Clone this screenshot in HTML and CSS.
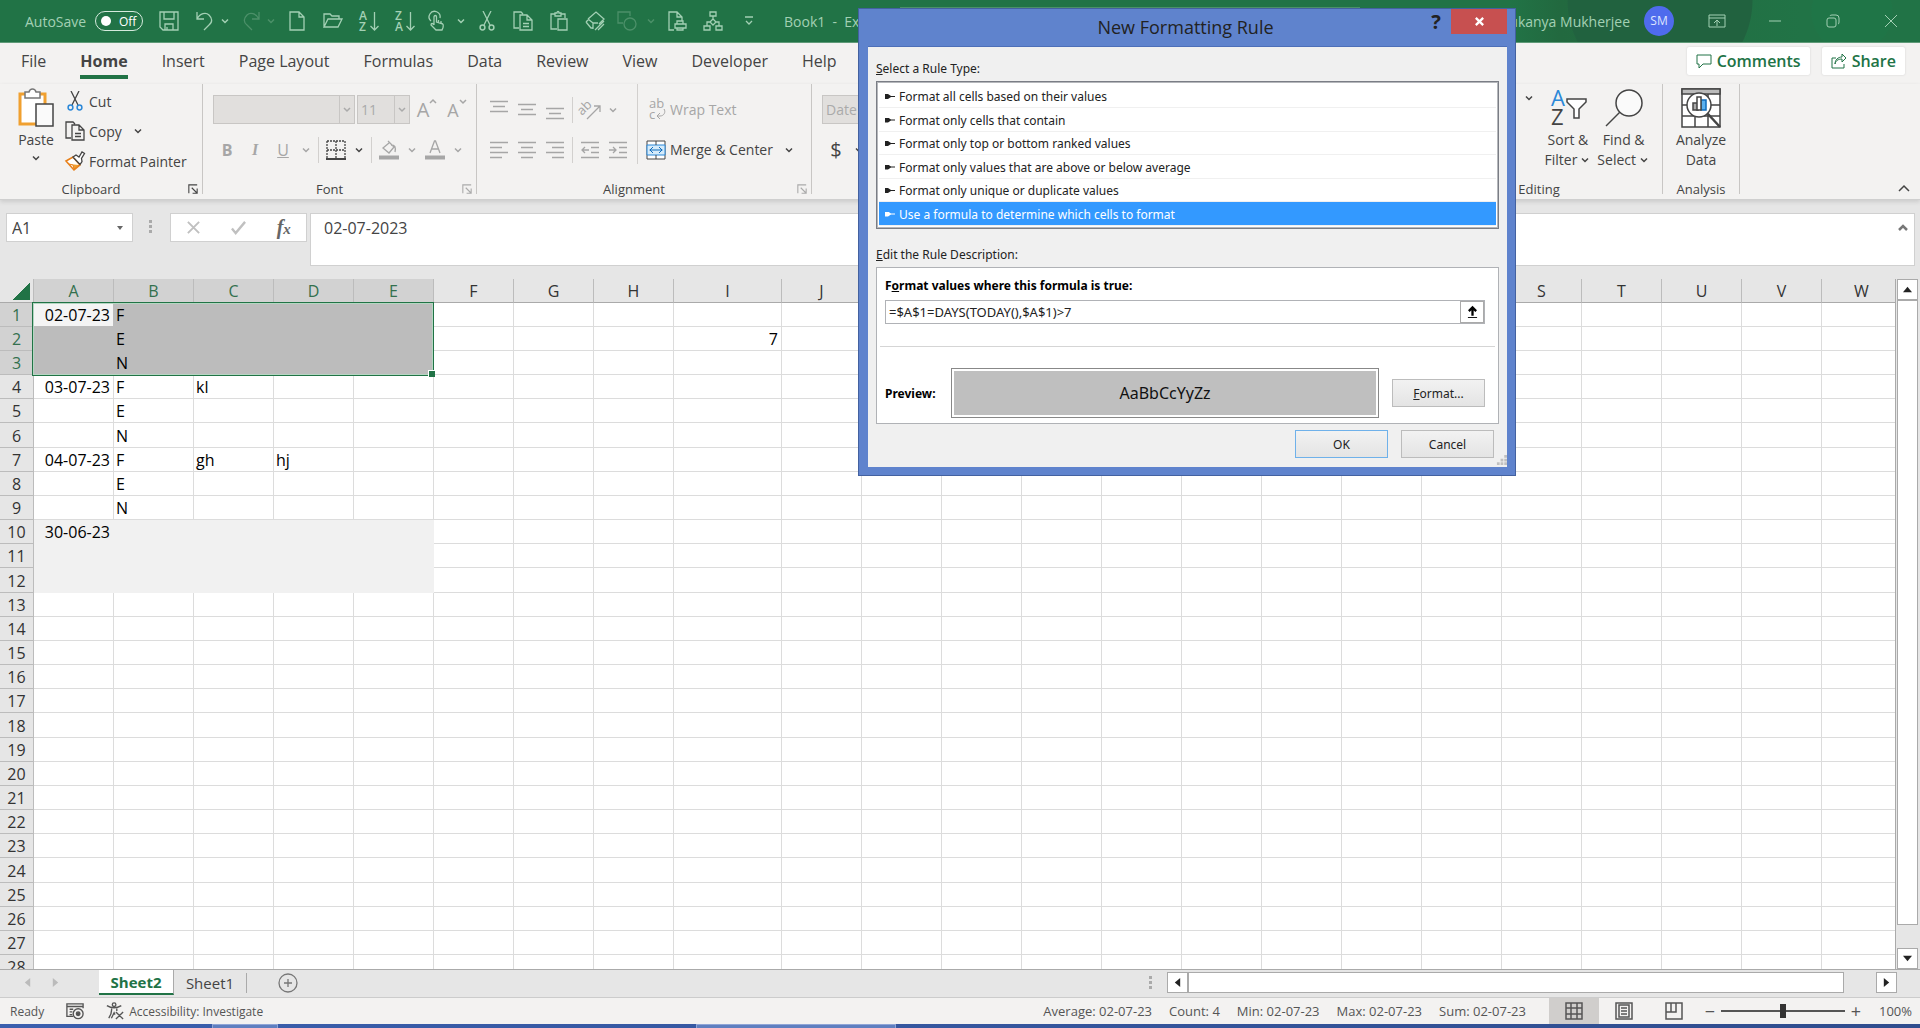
FILE: index.html
```html
<!DOCTYPE html>
<html lang="en">
<head>
    <meta charset="UTF-8">
    <meta name="viewport" content="width=device-width, initial-scale=1.0">
    <title>Book1 - Excel</title>
    <link rel="stylesheet" href="styles.css">
</head>
<body>
    <svg class="sprite" aria-hidden="true">
        <symbol id="chev" viewBox="0 0 12 12"><path d="M3 4.5l3 3 3-3" fill="none" stroke="currentColor" stroke-width="1.5"/></symbol>
        <symbol id="launch" viewBox="0 0 12 12"><path d="M1 11V1h10M4.5 4.5l6 6M11 5.5V11H5.5" fill="none" stroke="currentColor" stroke-width="1.3"/></symbol>
        <symbol id="scissors" viewBox="0 0 20 20"><path d="M6 0l7 14M14 0L7 14" fill="none" stroke="currentColor" stroke-width="1.3"/><g fill="none" stroke="var(--ring, currentColor)" stroke-width="1.5"><circle cx="5.5" cy="16.5" r="2.4"/><circle cx="14.5" cy="16.5" r="2.4"/></g></symbol>
        <symbol id="copy" viewBox="0 0 20 20"><path d="M6 17H1V1h7l2 2M7 4h7l5 5v10H7zM14 4v5h5M10 12.5h6M10 15.5h6" fill="none" stroke="currentColor" stroke-width="1.3"/></symbol>
    </svg>

    <header class="titlebar">
        <label class="autosave" for="autosave">AutoSave
            <span class="switch"><input type="checkbox" id="autosave">Off</span>
        </label>
        <div class="quick">
            <button aria-label="Save"><svg viewBox="0 0 20 20"><path d="M1 1h18v18H4l-3-3zM5 1v7h10V1M6 19v-6h8v6M8 16v3"/></svg></button>
            <button aria-label="Undo"><svg viewBox="0 0 20 20"><path d="M2 1v7h7M2 8c3-6 9-7 12-4s4 7 0 10l-5 5"/></svg></button>
            <button class="drop" aria-label="Undo list"><svg><use href="#chev"/></svg></button>
            <button class="dim" aria-label="Redo"><svg viewBox="0 0 20 20"><path d="M18 1v7h-7M18 8C15 2 9 1 6 4S2 11 6 14l5 5"/></svg></button>
            <button class="drop dim" aria-label="Redo list"><svg><use href="#chev"/></svg></button>
            <button aria-label="New"><svg viewBox="0 0 20 20"><path d="M3 1h9l5 5v13H3zM12 1v5h5"/></svg></button>
            <button aria-label="Open"><svg viewBox="0 0 20 20"><path d="M1 16V3h6l2 2h7v3M1 16l4-8h14l-4 8z"/></svg></button>
            <button aria-label="Sort ascending"><svg viewBox="0 0 20 20"><text x="0" y="9">A</text><text x="0" y="20">Z</text><path d="M15.5 1v18M11.5 15l4 4 4-4"/></svg></button>
            <button aria-label="Sort descending"><svg viewBox="0 0 20 20"><text x="0" y="9">Z</text><text x="0" y="20">A</text><path d="M15.5 1v18M11.5 15l4 4 4-4"/></svg></button>
            <button class="tight" aria-label="Touch mode"><svg viewBox="0 0 20 20"><path d="M4 10a5.5 5.5 0 1 1 9-3M7 14V6c0-2 2.5-2 2.5 0v5l5 1.500c2 .5 2 2 1.5 4L15 19H9l-5-5c0-2 2-2 3 0M11.5 9v3M14 10v3"/></svg></button>
            <button class="drop tight" aria-label="Touch options"><svg><use href="#chev"/></svg></button>
            <button aria-label="Cut"><svg><use href="#scissors"/></svg></button>
            <button aria-label="Copy"><svg><use href="#copy"/></svg></button>
            <button aria-label="Paste"><svg viewBox="0 0 20 20"><path d="M8 18H2V3h4M12 3h4v4M6 5V2h2c0-2 2-2 2 0h2v3zM9 8h9v11H9z"/></svg></button>
            <button aria-label="Clear"><svg viewBox="0 0 20 20"><path d="M3 8l8-7 8 7-5 5M3 8l5 4M1 11l3-3M1 11l5 6h2M8 12v6M8 12h5M10 19l9-9M13 19l6-6"/></svg></button>
            <button class="tight dim" aria-label="Shapes"><svg viewBox="0 0 20 20"><path d="M6 12H1V1h12v4"/><circle cx="13" cy="13" r="6"/></svg></button>
            <button class="drop tight dim" aria-label="Shape list"><svg><use href="#chev"/></svg></button>
            <button aria-label="Print preview"><svg viewBox="0 0 20 20"><path d="M7 19H2V1h8l5 5v4M10 1v5h5M10 13v-3h6v3M8 13h11v4H8zM10 17h6v2h-6z"/></svg></button>
            <button aria-label="Organise"><svg viewBox="0 0 20 20"><path d="M7 1h6v4H7zM10 5v3M10 8l3 3-3 3-3-3zM7 11H4v4M13 11h3v4M1 15h6v4H1zM13 15h6v4h-6z"/></svg></button>
            <button aria-label="Customize"><svg viewBox="0 0 20 20"><path d="M6 6h8M7 10l3 3 3-3"/></svg></button>
        </div>
        <span class="book">Book1&nbsp;&nbsp;-&nbsp;&nbsp;Excel</span>
        <input class="search" type="search" aria-label="Search">
        <span class="user">Sukanya Mukherjee</span>
        <span class="avatar">SM</span>
        <div class="window-buttons">
            <button aria-label="Ribbon display"><svg viewBox="0 0 18 18"><path d="M1 3h16v12H1zM1 6h16M9 14V8M6 11l3-3 3 3"/></svg></button>
            <button aria-label="Minimize"><svg viewBox="0 0 18 18"><path d="M3 9h12"/></svg></button>
            <button aria-label="Restore"><svg viewBox="0 0 18 18"><rect x="3" y="6" width="9" height="9" rx="2"/><path d="M6 4q0-1 2-1h4q3 0 3 3v4q0 2-1 2"/></svg></button>
            <button aria-label="Close"><svg viewBox="0 0 18 18"><path d="M3 3l12 12M15 3L3 15"/></svg></button>
        </div>
    </header>

    <nav class="tabs">
        <a href="#">File</a>
        <a href="#" class="active">Home</a>
        <a href="#">Insert</a>
        <a href="#">Page Layout</a>
        <a href="#">Formulas</a>
        <a href="#">Data</a>
        <a href="#">Review</a>
        <a href="#">View</a>
        <a href="#">Developer</a>
        <a href="#">Help</a>
        <div class="tab-actions">
            <button><svg viewBox="0 0 16 16"><path d="M1 2h14v9H7l-4 4v-4H1z"/></svg>Comments</button>
            <button><svg viewBox="0 0 16 16"><path d="M5 5H1v10h12v-4M4 11c1-4 4-5 7-5V9l4-4-4-4v3C7 4 4 7 4 11z"/></svg>Share</button>
        </div>
    </nav>

    <section class="ribbon">
        <div class="group clipboard">
            <div class="group-body">
                <button class="big paste">
                    <svg viewBox="0 0 40 40"><path d="M4 6h25v30H4z" fill="#fff" stroke="#f0a030" stroke-width="3"/><path d="M9 4h4c1-4 6-4 7 0h4v6H9z" fill="#fff" stroke="#777" stroke-width="1.5"/><path d="M20 16h17v22H20z" fill="#fafafa" stroke="#444" stroke-width="1.5"/></svg>
                    Paste
                    <svg class="chev"><use href="#chev"/></svg>
                </button>
                <div class="stack">
                    <button><svg class="ico cut"><use href="#scissors"/></svg>Cut</button>
                    <button><svg class="ico"><use href="#copy"/></svg>Copy<svg class="chev"><use href="#chev"/></svg></button>
                    <button><svg class="ico" viewBox="0 0 20 20"><path d="M1 10l7-4 7 8-6 5z" fill="#fff" stroke="#e8801a" stroke-width="1.6"/><path d="M4 13l4 1 1 4 5-4" fill="#f0a030" stroke="#e8801a"/><path d="M8 6l3-2 3 2 3-5 2.5 1.5-3 5 .5 3-2 3z" fill="#fff" stroke="#444" stroke-width="1.3"/></svg>Format Painter</button>
                </div>
            </div>
            <div class="group-foot"><span>Clipboard</span><svg><use href="#launch"/></svg></div>
        </div>

        <div class="group font">
            <div class="group-body rows">
                <div class="row">
                    <span class="combo name"><select aria-label="Font" disabled><option></option></select><svg><use href="#chev"/></svg></span>
                    <span class="combo size"><select aria-label="Font size" disabled><option>11</option></select><svg><use href="#chev"/></svg></span>
                    <button class="grow" disabled aria-label="Increase font size">A<svg viewBox="0 0 8 8"><path d="M1 5l3-3 3 3"/></svg></button>
                    <button class="grow less" disabled aria-label="Decrease font size">A<svg viewBox="0 0 8 8"><path d="M1 2l3 3 3-3"/></svg></button>
                </div>
                <div class="row">
                    <button class="tool" disabled><b>B</b></button>
                    <button class="tool" disabled><i>I</i></button>
                    <button class="tool" disabled><u>U</u></button>
                    <button class="mini" disabled aria-label="Underline options"><svg><use href="#chev"/></svg></button>
                    <span class="sep"></span>
                    <button class="tool dark" aria-label="Borders"><svg viewBox="0 0 20 20"><path d="M1 1h18v17M1 1v17M10 1v17M1 10h18" stroke-dasharray="2 1"/><path d="M0 19h20" stroke-width="2"/></svg></button>
                    <button class="mini dark" aria-label="Border options"><svg><use href="#chev"/></svg></button>
                    <span class="sep"></span>
                    <button class="tool" disabled aria-label="Fill colour"><svg viewBox="0 0 20 20"><path d="M9 1l6 6-5 6-6-5 6-5M12 5c4 0 5 2 4 7"/><path d="M0 17.5h20" stroke-width="4"/></svg></button>
                    <button class="mini" disabled aria-label="Fill options"><svg><use href="#chev"/></svg></button>
                    <button class="tool" disabled aria-label="Font colour"><svg viewBox="0 0 20 20"><path d="M5 13L9.500 1h1L15 13M6.500 9h7"/><path d="M0 17.5h20" stroke-width="4"/></svg></button>
                    <button class="mini" disabled aria-label="Font colour options"><svg><use href="#chev"/></svg></button>
                </div>
            </div>
            <div class="group-foot off"><span>Font</span><svg><use href="#launch"/></svg></div>
        </div>

        <div class="group alignment">
            <div class="group-body">
                <div class="rows">
                    <div class="row">
                        <button class="tool" disabled aria-label="Top align"><svg viewBox="0 0 20 20"><path d="M1 1.5h18M4 6.5h12M1 11.5h18"/></svg></button>
                        <button class="tool" disabled aria-label="Middle align"><svg viewBox="0 0 20 20"><path d="M1 4.5h18M4 9.5h12M1 14.5h18"/></svg></button>
                        <button class="tool" disabled aria-label="Bottom align"><svg viewBox="0 0 20 20"><path d="M1 8.5h18M4 13.5h12M1 18.5h18"/></svg></button>
                        <span class="sep"></span>
                        <button class="tool" disabled aria-label="Orientation"><svg viewBox="0 0 20 20"><text x="2" y="16" transform="rotate(-45 2 16)">ab</text><path d="M7 19L20 6M14 6h6v6"/></svg></button>
                        <button class="mini" disabled aria-label="Orientation options"><svg><use href="#chev"/></svg></button>
                    </div>
                    <div class="row">
                        <button class="tool" disabled aria-label="Align left"><svg viewBox="0 0 20 20"><path d="M1 2.5h18M1 7.5h12M1 12.5h18M1 17.5h12"/></svg></button>
                        <button class="tool" disabled aria-label="Center"><svg viewBox="0 0 20 20"><path d="M1 2.5h18M4 7.5h12M1 12.5h18M4 17.5h12"/></svg></button>
                        <button class="tool" disabled aria-label="Align right"><svg viewBox="0 0 20 20"><path d="M1 2.5h18M7 7.5h12M1 12.5h18M7 17.5h12"/></svg></button>
                        <span class="sep"></span>
                        <button class="tool" disabled aria-label="Decrease indent"><svg viewBox="0 0 20 20"><path d="M1 2.5h18M11 7.5h8M11 12.5h8M1 17.5h18M9 10H2M5 7l-3 3 3 3"/></svg></button>
                        <button class="tool" disabled aria-label="Increase indent"><svg viewBox="0 0 20 20"><path d="M1 2.5h18M11 7.5h8M11 12.5h8M1 17.5h18M1 10h7M5 7l3 3-3 3"/></svg></button>
                    </div>
                </div>
                <div class="rows wide">
                    <button class="text" disabled><svg class="ico" viewBox="0 0 20 20"><text x="3" y="8">ab</text><text x="3" y="19">c</text><path d="M18 9c2 3 0 7-4 7h-3M14 13l-3 3 3 3"/></svg>Wrap Text</button>
                    <button class="text"><svg class="ico merge" viewBox="0 0 20 20"><path d="M1 1h18v18H1z" fill="#fff" stroke="#444"/><path d="M1 5h18v10H1z" fill="#d5ebfa" stroke="#2b88d8"/><path d="M10 1v4M10 15v4" stroke="#444"/><path d="M3.5 10h13M7 7l-3 3 3 3M13 7l3 3-3 3" stroke="#0f6cbd"/></svg>Merge &amp; Center<svg class="chev"><use href="#chev"/></svg></button>
                </div>
            </div>
            <div class="group-foot off"><span>Alignment</span><svg><use href="#launch"/></svg></div>
        </div>

        <div class="group number">
            <div class="group-body rows">
                <div class="row"><span class="combo date"><select aria-label="Number format" disabled><option>Date</option></select></span></div>
                <div class="row"><button class="tool dark money">$</button><button class="mini dark" aria-label="Accounting options"><svg><use href="#chev"/></svg></button></div>
            </div>
        </div>

        <div class="group editing">
            <div class="group-body">
                <button class="mini dark" aria-label="Clear options"><svg><use href="#chev"/></svg></button>
                <button class="big">
                    <svg viewBox="0 0 40 40"><text class="blue" x="3" y="18">A</text><text x="3" y="37">Z</text><path d="M19 11h19v3l-7 7v9h-5v-9l-7-7z" fill="#fff"/></svg>
                    Sort &amp;<br><span>Filter<svg class="chev"><use href="#chev"/></svg></span>
                </button>
                <button class="big">
                    <svg viewBox="0 0 40 40"><circle cx="25" cy="15" r="13" fill="#fafafa"/><path d="M16 24L2 38"/></svg>
                    Find &amp;<br><span>Select<svg class="chev"><use href="#chev"/></svg></span>
                </button>
            </div>
            <div class="group-foot"><span>Editing</span></div>
        </div>

        <div class="group analysis">
            <div class="group-body">
                <button class="big">
                    <svg viewBox="0 0 40 40"><path d="M1 1h38v38H1z" fill="#fff"/><path d="M1 1h38v5H1z" fill="#bbb"/><path d="M1 17h38M1 28h38M14 28v11M27 6v33"/><circle cx="18" cy="17" r="12" fill="#fff"/><path d="M27 26l12 13" stroke-width="2.5"/><path d="M12 15h5v7h-5z" fill="#aaa"/><path d="M20 12h5v10h-5z" fill="#5bb0ee" stroke="#0f6cbd"/><path d="M16 9h4v13h-4z" fill="#fff"/></svg>
                    Analyze<br>Data
                </button>
            </div>
            <div class="group-foot"><span>Analysis</span></div>
        </div>
        <button class="collapse" aria-label="Collapse ribbon"><svg viewBox="0 0 12 12"><path d="M1 9l5-5 5 5"/></svg></button>
    </section>

    <section class="formula-bar">
        <div class="name-box"><input type="text" aria-label="Name box" value="A1"><svg viewBox="0 0 8 8"><path d="M1 2h6L4 6z"/></svg></div>
        <span class="dots"></span>
        <div class="fx">
            <button aria-label="Cancel entry"><svg viewBox="0 0 16 16"><path d="M2 2l12 12M14 2L2 14"/></svg></button>
            <button aria-label="Enter"><svg viewBox="0 0 16 16"><path d="M1 9l4 5L15 2" stroke-width="2.5"/></svg></button>
            <button class="fn" aria-label="Insert function"><i>f<small>x</small></i></button>
        </div>
        <div class="formula"><textarea aria-label="Formula">02-07-2023</textarea><button aria-label="Collapse formula bar"><svg viewBox="0 0 12 12"><path d="M2 8l4-4 4 4"/></svg></button></div>
    </section>

    <main class="sheet">
        <div class="grid">
            <table id="cells"></table>
            <div class="selection"></div>
        </div>
        <div class="vscroll">
            <button aria-label="Scroll up"><svg viewBox="0 0 10 10"><path d="M0 8h10L5 2z"/></svg></button>
            <div class="thumb"></div>
            <button aria-label="Scroll down"><svg viewBox="0 0 10 10"><path d="M0 2h10L5 8z"/></svg></button>
        </div>
    </main>

    <div class="sheet-tabs">
        <button class="nav" aria-label="Previous sheet"><svg viewBox="0 0 10 10"><path d="M8 0v10L2 5z"/></svg></button>
        <button class="nav" aria-label="Next sheet"><svg viewBox="0 0 10 10"><path d="M2 0v10l6-5z"/></svg></button>
        <button class="tab current">Sheet2</button>
        <button class="tab">Sheet1</button>
        <button class="add" aria-label="New sheet"><svg viewBox="0 0 20 20"><circle cx="10" cy="10" r="9"/><path d="M10 6v8M6 10h8"/></svg></button>
        <span class="dots"></span>
        <div class="hscroll">
            <button aria-label="Scroll left"><svg viewBox="0 0 10 10"><path d="M8 0v10L2 5z"/></svg></button>
            <div class="thumb"></div>
            <button aria-label="Scroll right"><svg viewBox="0 0 10 10"><path d="M2 0v10l6-5z"/></svg></button>
        </div>
    </div>

    <footer class="status">
        <span>Ready</span>
        <svg class="macro" viewBox="0 0 20 20"><path d="M8 16H1V2h18v5M1 5h18M4 8h4M4 11h3M4 14h3"/><circle cx="13.5" cy="13" r="5.5"/><circle cx="13.5" cy="13" r="2" fill="#555"/></svg>
        <span class="access"><svg viewBox="0 0 20 20"><circle cx="9" cy="3" r="2"/><path d="M1 4c5 3 11 3 16 0M6 6c1 5-1 9-3 12M6 18l3-6 1 2M12 6v4M11 11l8 8M19 11l-8 8"/></svg>Accessibility: Investigate</span>
        <div class="totals">
            <span>Average: 02-07-23</span>
            <span>Count: 4</span>
            <span>Min: 02-07-23</span>
            <span>Max: 02-07-23</span>
            <span>Sum: 02-07-23</span>
        </div>
        <div class="views">
            <button class="on" aria-label="Normal"><svg viewBox="0 0 18 18"><path d="M1 1h16v16H1zM1 6h16M1 12h16M6 1v16M12 1v16"/></svg></button>
            <button aria-label="Page layout"><svg viewBox="0 0 18 18"><path d="M1 1h16v16H1zM4 3h10v12H4zM6 6h6M6 9h6M6 12h6"/></svg></button>
            <button aria-label="Page break"><svg viewBox="0 0 18 18"><path d="M1 1h16v16H1zM1 10h10V1M6 1v9"/></svg></button>
        </div>
        <div class="zoom">
            <button aria-label="Zoom out">−</button>
            <input type="range" aria-label="Zoom" min="0" max="100" value="50">
            <button aria-label="Zoom in">+</button>
            <span>100%</span>
        </div>
    </footer>
    <div class="taskbar"><i></i><i></i></div>

    <div class="dialog" role="dialog" aria-labelledby="dialog-title">
        <div class="dialog-head">
            <h1 id="dialog-title">New Formatting Rule</h1>
            <button class="help" aria-label="Help">?</button>
            <button class="close" aria-label="Close"><svg viewBox="0 0 12 12"><path d="M2 2l8 8M10 2l-8 8"/></svg></button>
        </div>
        <form class="dialog-body">
            <p id="rule-label"><u>S</u>elect a Rule Type:</p>
            <ul class="rules" role="listbox" aria-labelledby="rule-label">
                <li role="option">Format all cells based on their values</li>
                <li role="option">Format only cells that contain</li>
                <li role="option">Format only top or bottom ranked values</li>
                <li role="option">Format only values that are above or below average</li>
                <li role="option">Format only unique or duplicate values</li>
                <li role="option" aria-selected="true">Use a formula to determine which cells to format</li>
            </ul>
            <p class="edit"><u>E</u>dit the Rule Description:</p>
            <div class="description">
                <label for="rule-formula">F<u>o</u>rmat values where this formula is true:</label>
                <div class="ref">
                    <input type="text" id="rule-formula" value="=$A$1=DAYS(TODAY(),$A$1)&gt;7">
                    <button type="button" aria-label="Collapse dialog"><svg viewBox="0 0 12 14"><path d="M6 11V3M2 6l4-4 4 4" stroke-width="2.5"/><path d="M1 13h10"/></svg></button>
                </div>
                <hr>
                <div class="preview-row">
                    <b>Preview:</b>
                    <div class="preview">AaBbCcYyZz</div>
                    <button type="button"><span><u>F</u>ormat...</span></button>
                </div>
            </div>
            <div class="buttons">
                <button type="button" class="ok">OK</button>
                <button type="button">Cancel</button>
            </div>
        </form>
        <svg class="grip" viewBox="0 0 12 12"><path d="M9 0h3v3H9zM5 4h3v3H5zM9 4h3v3H9zM1 8h3v3H1zM5 8h3v3H5zM9 8h3v3H9z"/></svg>
    </div>

    <script src="script.js"></script>
</body>
</html>
```

FILE: script.js
```js
const columns = 'ABCDEFGHIJKLMNOPQRSTUVW'.split('');
const values = {
    A1: '02-07-23', B1: 'F', B2: 'E', B3: 'N', I2: '7',
    A4: '03-07-23', B4: 'F', C4: 'kl', B5: 'E', B6: 'N',
    A7: '04-07-23', B7: 'F', C7: 'gh', D7: 'hj', B8: 'E', B9: 'N',
    A10: '30-06-23'
};
const table = document.getElementById('cells');

function addCell(row, tag, text, className) {
    const cell = document.createElement(tag);
    cell.textContent = text;
    if (className) cell.className = className;
    row.appendChild(cell);
}

const head = table.createTHead().insertRow();
addCell(head, 'th', '', 'corner');
columns.forEach((name, i) => {
    addCell(head, 'th', name, (i < 5 ? 'picked' : '') + (name === 'I' ? ' broad' : ''));
});

const body = table.createTBody();
for (let r = 1; r <= 28; r++) {
    const row = body.insertRow();
    addCell(row, 'th', r, r <= 3 ? 'picked' : '');
    columns.forEach((name, i) => {
        const classes = [];
        if (i < 5 && r <= 3) classes.push('dark');
        if (i < 5 && r >= 10 && r <= 12) classes.push('light');
        if (name === 'A' || name === 'I') classes.push('num');
        if (name === 'A' && r === 1) classes.push('origin');
        addCell(row, 'td', values[name + r] || '', classes.join(' '));
    });
}
```

FILE: styles.css
```css
* {
    box-sizing: border-box;
}

body {
    margin: 0;
    height: 100vh;
    display: flex;
    flex-direction: column;
    overflow: hidden;
    font-family: "Open Sans", "Noto Sans", sans-serif;
    font-size: 14px;
    color: #444;
    background: #e6e6e6;
}

button, input, select, textarea {
    font: inherit;
    color: inherit;
    margin: 0;
    padding: 0;
    border: none;
    background: none;
    border-radius: 0;
}

button {
    display: flex;
    align-items: center;
    justify-content: center;
    white-space: nowrap;
}

svg {
    fill: none;
    stroke: currentColor;
    flex: none;
    overflow: visible;
}

svg text {
    fill: currentColor;
    stroke: none;
}

.sprite {
    position: absolute;
    width: 0;
    height: 0;
}

.chev {
    width: 12px;
    height: 12px;
}

/* title bar */
.titlebar {
    height: 43px;
    flex: none;
    display: flex;
    align-items: center;
    padding-left: 25px;
    color: #a3d0b4;
    border-bottom: 1px solid #5f9a78;
    background:
        radial-gradient(circle at 1852px 12px, #1f7547 0 40px, transparent 41px),
        radial-gradient(circle at 1660px 0, #21623f 0 92px, transparent 93px),
        linear-gradient(90deg, #217346 0 1510px, #22693f 1560px, #217346 1800px);
}

.autosave {
    width: 118px;
    display: flex;
    align-items: center;
    justify-content: space-between;
    font-size: 14px;
}

.switch {
    width: 48px;
    height: 20px;
    display: flex;
    align-items: center;
    gap: 8px;
    padding: 0 5px;
    border: 1px solid #d5eadd;
    border-radius: 10px;
    font-size: 12px;
    color: #fff;
}

.switch input {
    appearance: none;
    width: 10px;
    height: 10px;
    border-radius: 50%;
    background: #fff;
}

.quick {
    display: flex;
    align-items: center;
}

.quick button {
    margin-left: 16px;
}

.quick svg {
    width: 20px;
    height: 20px;
    stroke-width: 1.3;
}

.quick text {
    font-size: 12px;
    font-weight: 600;
}

.quick .drop {
    margin-left: 4px;
}

.quick .drop svg {
    width: 12px;
    height: 12px;
}

.quick .drop + button {
    margin-left: 10px;
}

.quick .tight {
    margin-left: 12px;
}

.quick .drop.tight {
    margin-left: 8px;
}

.quick .dim {
    color: #4c9069;
}

.book {
    width: 116px;
    margin-left: 25px;
}

.search {
    width: 460px;
    height: 29px;
    border: 1px solid #4c9069;
}

.user {
    margin-left: auto;
}

.avatar {
    width: 30px;
    height: 30px;
    margin: 0 14px 0 14px;
    border-radius: 50%;
    background: #4f6bed;
    color: #dfe5ff;
    font-size: 12px;
    line-height: 30px;
    text-align: center;
}

.window-buttons {
    display: flex;
}

.window-buttons button {
    width: 58px;
}

.window-buttons svg {
    width: 18px;
    height: 18px;
}

/* ribbon tabs */
.tabs {
    height: 41px;
    flex: none;
    display: flex;
    align-items: center;
    gap: 34px;
    padding: 0 15px 5px 21px;
    background: #f3f2f1;
    font-size: 16px;
}

.tabs a {
    height: 36px;
    line-height: 36px;
    color: #444;
    text-decoration: none;
}

.tabs .active {
    font-weight: 700;
    border-bottom: 4px solid #217346;
}

.tab-actions {
    margin-left: auto;
    display: flex;
    gap: 12px;
}

.tab-actions button {
    height: 28px;
    padding: 0 9px;
    gap: 5px;
    border-radius: 2px;
    background: #fff;
    box-shadow: 0 0 2px #ccc;
    color: #217346;
    font-weight: 600;
}

.tab-actions svg {
    width: 16px;
    height: 16px;
}

/* ribbon */
.ribbon {
    height: 116px;
    flex: none;
    display: flex;
    padding-bottom: 5px;
    background: #f3f2f1;
    border-bottom: 1px solid #cfcfcf;
    box-shadow: 0 2px 4px #ccc;
}

.group {
    display: flex;
    flex-direction: column;
    flex: none;
    border-right: 1px solid #c8c6c4;
}

.group-body {
    flex: 1;
    display: flex;
}

.group-foot {
    height: 18px;
    display: flex;
    align-items: center;
    padding: 0 4px;
    margin-bottom: -4px;
    font-size: 13px;
}

.group-foot span {
    flex: 1;
    text-align: center;
}

.group-foot span:not(:last-child) {
    padding-right: 10px;
}

.group-foot svg {
    width: 10px;
    height: 10px;
}

.off svg {
    color: #aaa;
}

.clipboard {
    width: 203px;
}

.font {
    width: 274px;
}

.alignment {
    width: 335px;
}

.number {
    border: none;
}

.editing {
    width: 247px;
    margin-left: auto;
}

.analysis {
    width: 77px;
}

.big {
    flex-direction: column;
    justify-content: flex-start;
    line-height: 20px;
    padding-top: 4px;
}

.big > svg:first-child {
    width: 40px;
    height: 40px;
    margin-bottom: 2px;
    stroke-width: 1.5;
}

.big text {
    font-size: 22px;
}

.big .blue {
    fill: #2b88d8;
}

.big span {
    display: flex;
    align-items: center;
    gap: 2px;
}

.paste {
    width: 60px;
    padding-left: 12px;
}

.paste .chev {
    margin-top: 2px;
}

.stack {
    display: flex;
    flex-direction: column;
    padding-top: 2px;
}

.stack button {
    height: 30px;
    justify-content: flex-start;
    padding-left: 5px;
}

.ico {
    width: 20px;
    height: 20px;
    margin-right: 4px;
}

.cut {
    --ring: #2b88d8;
}

.stack .chev, .wide .chev {
    margin-left: 10px;
}

.rows {
    display: flex;
    flex-direction: column;
    gap: 11px;
    padding-top: 11px;
}

.row {
    display: flex;
    align-items: center;
    height: 29px;
}

.font .rows {
    padding-left: 10px;
}

.combo {
    display: flex;
    align-items: center;
    height: 29px;
    border: 1px solid #c8c6c4;
    background: #e1dfdd;
    color: #aaa;
    margin-right: 2px;
}

.combo select {
    appearance: none;
    flex: 1;
    height: 100%;
    padding-left: 3px;
    opacity: 1;
}

.combo svg {
    width: 15px;
    height: 27px;
    padding: 1px;
    border-left: 1px solid #c8c6c4;
}

.name {
    width: 142px;
}

.size {
    width: 53px;
}

.date {
    width: 100px;
}

button:disabled {
    color: #a6a6a6;
}

.grow {
    align-items: flex-start;
    width: 30px;
    font-size: 20px;
    line-height: 24px;
}

.less {
    font-size: 18px;
}

.grow svg {
    width: 8px;
    height: 8px;
    stroke-width: 1.5;
}

.tool {
    width: 28px;
    height: 28px;
    font-size: 16px;
}

.tool svg {
    width: 20px;
    height: 20px;
    stroke-width: 1.3;
}

.tool text, .ico text {
    font-size: 13px;
}

.tool i {
    font-family: "Liberation Serif", serif;
    font-weight: bold;
}

.mini {
    width: 18px;
    height: 28px;
}

.mini svg {
    width: 12px;
    height: 12px;
}

.sep {
    width: 1px;
    height: 26px;
    margin: 0 3px;
    background: #d2d0ce;
}

.alignment .rows {
    padding-left: 8px;
}

.alignment .wide {
    height: 80px;
    margin-left: auto;
    width: 174px;
    border-left: 1px solid #d2d0ce;
}

.text {
    height: 29px;
    justify-content: flex-start;
}

.number .rows {
    padding-left: 10px;
}

.money {
    font-size: 20px;
}

.editing .group-body {
    justify-content: flex-end;
    gap: 6px;
    padding-right: 12px;
}

.analysis .group-body {
    justify-content: center;
}

.collapse {
    width: 180px;
    align-items: flex-end;
    justify-content: flex-end;
    padding: 0 10px 0 0;
}

.collapse svg {
    width: 12px;
    height: 12px;
    stroke-width: 1.5;
}

/* formula bar */
.formula-bar {
    flex: none;
    display: flex;
    align-items: flex-start;
    height: 79px;
    padding: 13px 5px 0 6px;
    font-size: 16px;
}

.name-box {
    width: 127px;
    height: 29px;
    display: flex;
    align-items: center;
    padding: 0 8px 0 5px;
    background: #fff;
    border: 1px solid #d0d0d0;
}

.name-box input {
    flex: 1;
    min-width: 0;
}

.name-box svg {
    width: 8px;
    height: 8px;
    fill: #666;
    stroke: none;
}

.dots {
    width: 3px;
    height: 14px;
    background: repeating-linear-gradient(#aaa 0 3px, transparent 3px 5px);
}

.formula-bar .dots {
    margin: 7px 18px 0 16px;
}

.fx {
    width: 137px;
    height: 29px;
    display: flex;
    justify-content: space-around;
    background: #fff;
    border: 1px solid #d0d0d0;
    color: #c0c0c0;
}

.fx svg {
    width: 15px;
    height: 15px;
    stroke-width: 2;
}

.fn {
    color: #666;
    font-family: "Liberation Serif", serif;
    font-size: 20px;
    font-weight: bold;
}

.fn small {
    font-size: 15px;
}

.formula {
    flex: 1;
    height: 53px;
    margin-left: 3px;
    display: flex;
    align-items: flex-start;
    background: #fff;
    border: 1px solid #d0d0d0;
}

.formula textarea {
    flex: 1;
    height: 50px;
    padding: 3px 13px;
    resize: none;
}

.formula button {
    padding: 8px 5px;
}

.formula svg {
    width: 12px;
    height: 12px;
    stroke-width: 2.5;
    color: #777;
}

/* grid */
.sheet {
    flex: 1;
    min-height: 0;
    display: flex;
    border-bottom: 1px solid #aaa;
}

.grid {
    flex: 1;
    min-width: 0;
    position: relative;
    overflow: hidden;
    border-right: 1px solid #aaa;
}

#cells {
    width: 1902px;
    table-layout: fixed;
    border-spacing: 0;
    font-size: 16px;
    color: #000;
}

#cells th, #cells td {
    width: 80px;
    height: 24px;
    padding: 1px 3px 0 2px;
    line-height: 22px;
    background: #fff;
    border-right: 1px solid #dcdcdc;
    border-bottom: 1px solid #dcdcdc;
    text-align: left;
    white-space: nowrap;
}

#cells th {
    padding: 1px 0 0;
    background: #e6e6e6;
    border-color: #bcbcbc;
    color: #333;
    font-weight: 400;
    text-align: center;
}

#cells thead th {
    border-bottom-color: #aaa;
}

#cells .corner {
    width: 34px;
    background: linear-gradient(135deg, transparent 50%, #217346 50%) 13px 4px / 17px 17px no-repeat #e6e6e6;
}

#cells .broad {
    width: 108px;
}

#cells tbody tr:nth-child(6n) td {
    height: 25px;
}

#cells .picked {
    background: #d2d2d2;
    color: #33704e;
}

#cells .num {
    text-align: right;
}

#cells .dark {
    background: #bcbcbc;
    border-color: #bcbcbc;
}

#cells .light {
    background: #f1f1f1;
    border-color: #f1f1f1;
}

#cells .origin {
    background: #f4f4f4;
}

.selection {
    position: absolute;
    left: 32px;
    top: 23px;
    width: 402px;
    height: 74px;
    border: 1px solid #217346;
    box-shadow: inset 0 0 0 1px #b5d6c2;
}

.selection::after {
    content: "";
    position: absolute;
    right: -2px;
    bottom: -2px;
    width: 6px;
    height: 6px;
    background: #217346;
    border-top: 1px solid #fff;
    border-left: 1px solid #fff;
}

.vscroll {
    width: 24px;
    display: flex;
    flex-direction: column;
    padding: 0 2px 0 1px;
}

.vscroll button, .hscroll button {
    width: 21px;
    height: 21px;
    flex: none;
    background: #fff;
    border: 1px solid #aaa;
}

.vscroll svg, .hscroll svg {
    width: 9px;
    height: 9px;
    fill: #222;
    stroke: none;
}

.thumb {
    background: #fff;
    border: 1px solid #aaa;
}

.vscroll .thumb {
    flex: 1;
    margin-bottom: 23px;
}

/* sheet tabs */
.sheet-tabs {
    flex: none;
    height: 28px;
    display: flex;
    align-items: center;
    padding: 0 23px 2px 13px;
    border-bottom: 1px solid #ccc;
}

.nav {
    width: 28px;
}

.nav svg {
    width: 9px;
    height: 9px;
    fill: #bbb;
    stroke: none;
}

.tab {
    height: 20px;
    width: 73px;
    font-size: 15px;
    border-right: 1px solid #aaa;
}

.current {
    height: 25px;
    width: 75px;
    margin-left: 30px;
    background: #fff;
    border-bottom: 2px solid #217346;
    color: #217346;
    font-weight: 700;
}

.add {
    margin-left: 31px;
    color: #777;
}

.add svg {
    width: 20px;
    height: 20px;
    stroke-width: 1.3;
}

.sheet-tabs .dots {
    margin-left: auto;
    margin-right: 15px;
}

.hscroll {
    width: 730px;
    display: flex;
}

.hscroll .thumb {
    flex: 1;
    margin-right: 32px;
}

/* status bar */
.status {
    flex: none;
    height: 26px;
    display: flex;
    align-items: center;
    padding: 0 8px 0 10px;
    background: #f3f2f1;
    font-size: 12px;
    color: #555;
}

.macro {
    width: 18px;
    height: 18px;
    margin: 0 22px;
    stroke-width: 1.5;
}

.access {
    display: flex;
    align-items: center;
    gap: 5px;
}

.access svg {
    width: 18px;
    height: 18px;
    stroke-width: 1.5;
}

.totals {
    margin-left: auto;
    display: flex;
    gap: 17px;
    font-size: 13px;
}

.views {
    display: flex;
    margin-left: 23px;
}

.views button {
    width: 50px;
    height: 26px;
}

.views svg {
    width: 18px;
    height: 18px;
    stroke-width: 1.5;
}

.views .on {
    background: #d0cecc;
}

.zoom {
    display: flex;
    align-items: center;
}

.zoom button {
    width: 22px;
    height: 20px;
    font-size: 18px;
}

.zoom input {
    appearance: none;
    width: 124px;
    height: 14px;
    background: linear-gradient(#555, #555) center / 100% 2px no-repeat;
}

.zoom input::-webkit-slider-thumb {
    appearance: none;
    width: 6px;
    height: 14px;
    background: #333;
}

.zoom span {
    margin-left: 12px;
    font-size: 13px;
}

.taskbar {
    flex: none;
    height: 4px;
    display: flex;
    gap: 418px;
    padding-left: 212px;
    background: linear-gradient(90deg, #3a5fae, #2f4d8e);
}

.taskbar i {
    width: 66px;
    background: #5f7fc0;
    border: 1px solid #8fa5d6;
    border-bottom: none;
}

.taskbar i + i {
    width: 200px;
}

/* dialog */
.dialog {
    position: absolute;
    left: 858px;
    top: 8px;
    width: 658px;
    padding: 0 8px 8px 9px;
    background: #5f83cd;
    border: 1px solid #4361a0;
    font-family: "Noto Sans", "Open Sans", sans-serif;
    font-size: 12px;
    color: #222;
}

.dialog-head {
    height: 37px;
    display: flex;
    align-items: flex-start;
}

.dialog h1 {
    flex: 1;
    margin: 0;
    padding-left: 82px;
    font-family: "Open Sans", sans-serif;
    font-size: 18px;
    font-weight: 400;
    line-height: 36px;
    text-align: center;
}

.help {
    width: 30px;
    height: 25px;
    font-size: 20px;
    font-weight: 700;
}

.close {
    width: 56px;
    height: 25px;
    background: #c75050;
    color: #fff;
}

.close svg {
    width: 11px;
    height: 11px;
    stroke-width: 2.5;
}

.dialog-body {
    padding: 12px 8px 9px;
    background: #f0f0f0;
    border-top: 1px solid #4d6fb8;
}

.dialog p {
    margin: 0;
    padding-bottom: 2px;
    line-height: 20px;
}

.rules {
    list-style: none;
    margin: 0;
    padding: 3px 2px 2px;
    background: #fff;
    border: 1px solid #7a7d85;
    outline: 1px solid #b5b7bb;
    outline-offset: -2px;
}

.rules li {
    height: 23px;
    display: flex;
    align-items: center;
    gap: 4px;
    padding: 1px 0 0 6px;
    border-bottom: 1px solid #f0f0f0;
}

.rules li:nth-child(even) {
    height: 24px;
}

.rules li::before {
    content: "";
    width: 10px;
    height: 5px;
    background: currentColor;
    clip-path: polygon(0 0, 30% 0, 60% 40%, 100% 40%, 100% 60%, 60% 60%, 30% 100%, 0 100%);
}

.rules [aria-selected] {
    background: #3399ff;
    color: #fff;
}

.dialog .edit {
    padding-top: 16px;
}

.description {
    padding: 9px 13px 5px 8px;
    background: #fff;
    border: 1px solid #b0b2b6;
}

.description label {
    display: block;
    line-height: 18px;
    font-weight: 700;
    color: #000;
}

.ref {
    display: flex;
    height: 24px;
    margin-top: 5px;
    border: 1px solid #b0b2b6;
    font-size: 13px;
}

.ref input {
    flex: 1;
    padding-left: 3px;
}

.ref button {
    width: 24px;
    border: 1px solid #aaa;
    color: #000;
}

.ref svg {
    width: 11px;
    height: 14px;
}

.description hr {
    margin: 22px -10px 21px -5px;
    border: none;
    border-top: 1px solid #d5d5d5;
}

.preview-row {
    display: flex;
    align-items: center;
}

.preview-row b {
    width: 66px;
    color: #000;
}

.preview {
    flex: 1;
    height: 50px;
    margin-right: 13px;
    border: 1px solid #888;
    background: #bfbfbf;
    box-shadow: inset 0 0 0 2px #fff;
    font-size: 16px;
    line-height: 48px;
    text-align: center;
    color: #111;
}

.preview-row button, .buttons button {
    width: 93px;
    height: 28px;
    border: 1px solid #bcbcbc;
    background: linear-gradient(#f2f2f2, #e4e4e4);
}

.buttons {
    display: flex;
    justify-content: flex-end;
    gap: 13px;
    margin-top: 6px;
    padding-right: 5px;
}

.buttons .ok {
    border-color: #6fb1ea;
}

.grip {
    position: absolute;
    right: 8px;
    bottom: 9px;
    width: 11px;
    height: 11px;
    fill: #c0c0c0;
    stroke: none;
}
```
